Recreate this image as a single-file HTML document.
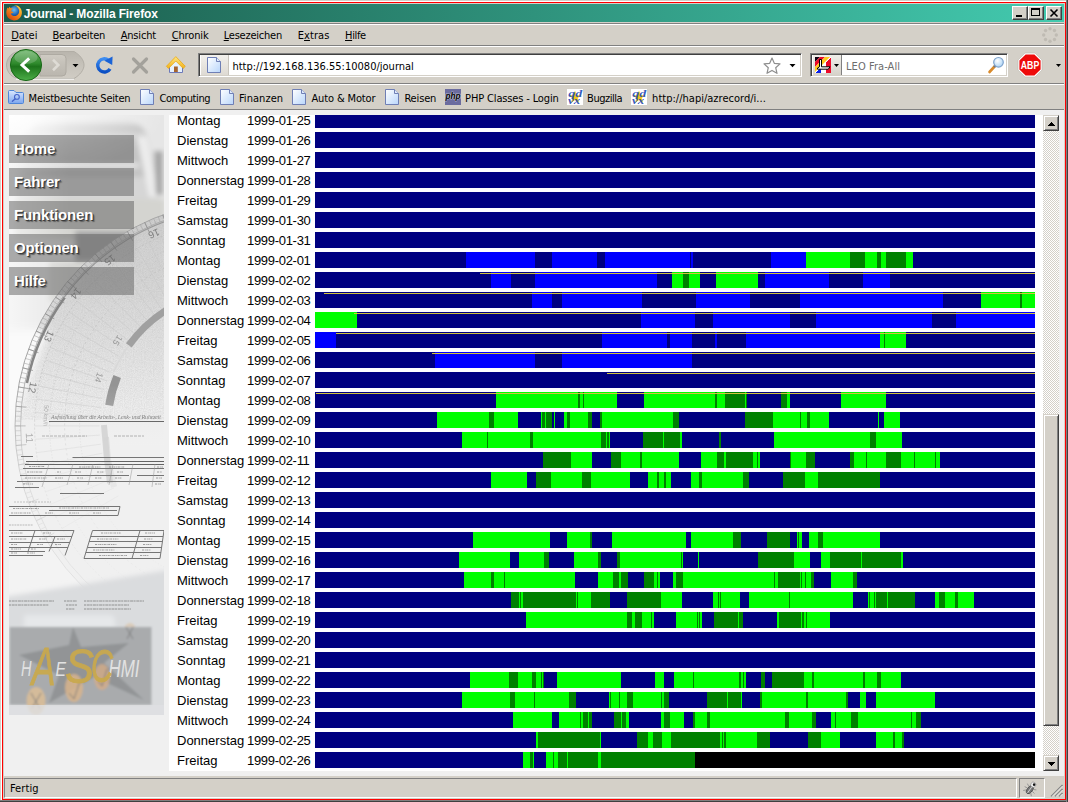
<!DOCTYPE html>
<html lang="de">
<head>
<meta charset="utf-8">
<title>Journal - Mozilla Firefox</title>
<style>
html,body{margin:0;padding:0;}
body{width:1068px;height:802px;overflow:hidden;position:relative;background:#d4d0c8;font-family:"DejaVu Sans Condensed","DejaVu Sans","Liberation Sans",sans-serif;font-size:11px;color:#000;}
.abs{position:absolute;}
.tx{position:absolute;white-space:nowrap;line-height:14px;}
#t-title{left:19.7px;letter-spacing:-0.132px}
#t-m1{left:7.2px;letter-spacing:-0.055px}
#t-m2{left:48.4px;letter-spacing:-0.160px}
#t-m3{left:116.7px;letter-spacing:-0.185px}
#t-m4{left:167.7px;letter-spacing:-0.146px}
#t-m5{left:219.7px;letter-spacing:-0.228px}
#t-m6{left:293.7px;letter-spacing:0.081px}
#t-m7{left:341.0px;letter-spacing:-0.333px}
#t-url{left:228.4px;letter-spacing:0.009px}
#t-search{left:842.0px;letter-spacing:0.067px}
#t-b1{left:24.6px;letter-spacing:-0.235px}
#t-b2{left:155.4px;letter-spacing:-0.395px}
#t-b3{left:234.9px;letter-spacing:0.055px}
#t-b4{left:307.4px;letter-spacing:-0.125px}
#t-b5{left:400.4px;letter-spacing:-0.160px}
#t-b6{left:461.1px;letter-spacing:-0.147px}
#t-b7{left:583.1px;letter-spacing:-0.487px}
#t-b8{left:648.1px;letter-spacing:0.014px}
#t-status{left:5.9px;letter-spacing:0.106px}
/* outer frame */
#f-white{left:1px;top:1px;width:1065px;height:799px;border-left:1px solid #fff;border-top:1px solid #fff;box-sizing:border-box;}
#f-red{left:2px;top:2px;width:1064px;height:798px;border:1px solid #ff0000;box-sizing:border-box;}
#f-dk1{left:0;top:800px;width:1068px;height:1px;background:#808080;}
#f-dk2{left:0;top:801px;width:1068px;height:1px;background:#404040;}
#f-dk3{left:1066px;top:0;width:1px;height:802px;background:#808080;}
#f-dk4{left:1067px;top:0;width:1px;height:802px;background:#404040;}
/* title bar */
#title{left:4px;top:4px;width:1060px;height:18px;background:linear-gradient(to right,#1b5b4b 0%,#2f927c 50%,#43caaf 100%);}
#title .t{top:2px;color:#fff;font-family:"Liberation Sans",sans-serif;font-weight:bold;font-size:12px;line-height:16px;}
.wbtn{position:absolute;top:2px;width:16px;height:14px;background:#d4d0c8;box-sizing:border-box;border:1px solid;border-color:#fff #404040 #404040 #fff;box-shadow:inset -1px -1px 0 #808080;}
/* separators */
.sep{left:4px;width:1060px;height:2px;border-top:1px solid #808080;border-bottom:1px solid #fff;box-sizing:border-box;}
/* menu */
#menu{left:4px;top:25px;width:1060px;height:20px;}
#menu span{position:absolute;top:4px;line-height:14px;white-space:nowrap;}
#menu u{text-decoration:underline;text-underline-offset:1px;}
/* nav bar */
#nav{left:4px;top:47px;width:1060px;height:36px;}
.field{position:absolute;background:#fff;box-sizing:border-box;border:1px solid;border-color:#808080 #fff #fff #808080;box-shadow:inset 1px 1px 0 #404040, inset -1px -1px 0 #d4d0c8;}
/* bookmarks */
#bm{left:4px;top:85px;width:1060px;height:24px;}
#bm .b{position:absolute;top:7px;line-height:14px;white-space:nowrap;}
#bm svg{position:absolute;}
/* content */
#page{left:4px;top:110px;width:1060px;height:666px;background:#f0f0f0;overflow:hidden;}
#side{left:9px;top:115px;width:155px;height:600px;overflow:hidden;background:#e9e9e9;}
#frame{left:169px;top:115px;width:874px;height:656px;background:#fff;overflow:hidden;}
#frame .bars{position:absolute;left:0;top:0;}
.row{position:absolute;left:0;height:16px;line-height:16px;font-family:"Liberation Sans",sans-serif;font-size:13px;white-space:nowrap;color:#000;}
.row .dn{position:absolute;left:8px;top:1px;}
.row .dt{position:absolute;left:78px;top:1px;letter-spacing:-0.3px;}
/* scrollbar */
#sb{left:1043px;top:115px;width:16px;height:656px;background:#eae8e3;background-image:conic-gradient(#fff 25%,#d4d0c8 0 50%,#fff 0 75%,#d4d0c8 0);background-size:2px 2px;}
.sbtn{position:absolute;left:0;width:16px;background:#d4d0c8;box-sizing:border-box;border:1px solid;border-color:#d4d0c8 #404040 #404040 #d4d0c8;box-shadow:inset 1px 1px 0 #fff, inset -1px -1px 0 #808080;}
/* status */
#status{left:4px;top:776px;width:1060px;height:22px;}
.panel{position:absolute;box-sizing:border-box;border:1px solid;border-color:#808080 #fff #fff #808080;}
/* side menu */
.mi{position:absolute;left:0;width:125px;height:28px;background:rgba(100,100,100,0.52);color:#fff;font-family:"Liberation Sans",sans-serif;font-weight:bold;font-size:15px;line-height:28px;letter-spacing:-0.15px;text-shadow:1px 1px 0 #3a3a3a,2px 2px 1px rgba(70,70,70,.7);}
.mi span{position:absolute;left:5px;top:0;}
</style>
</head>
<body>
<div class="abs" id="f-white"></div>
<div class="abs" id="f-red"></div>
<div class="abs" id="f-dk1"></div><div class="abs" id="f-dk2"></div><div class="abs" id="f-dk3"></div><div class="abs" id="f-dk4"></div>

<!-- TITLE BAR -->
<div class="abs" id="title">
<svg class="abs" width="18" height="18" viewBox="0 0 18 18" style="left:1px;top:0px"><defs>
<radialGradient id="gl" cx="0.45" cy="0.35" r="0.7"><stop offset="0" stop-color="#6cc0f0"/><stop offset="0.6" stop-color="#1f64b4"/><stop offset="1" stop-color="#10306c"/></radialGradient>
<linearGradient id="fx" x1="1" y1="0" x2="0.2" y2="1"><stop offset="0" stop-color="#ffe14a"/><stop offset="0.45" stop-color="#f7941d"/><stop offset="1" stop-color="#d2420d"/></linearGradient></defs>
<circle cx="9.6" cy="7.6" r="5.6" fill="url(#gl)"/>
<path d="M9 1.2 C13.6 0.8 17.2 4.4 16.9 9 C16.6 13.6 13 16.6 8.8 16.4 C4.4 16.2 1.2 12.8 1.3 8.6 C1.3 6.4 1.9 4.6 2.6 3.4 L3.4 4.6 L4.6 2.8 L6 4.6 C6.6 4.2 7.4 4 8 4.2 C6.6 5.2 6.2 6.4 6.4 7.4 L8.6 8 C8 9 6.8 9.6 5.8 9.4 C6.6 11.4 8.6 12.4 10.6 12 C13 11.4 14.4 9.2 14.2 6.8 C14 4.2 12 2 9 1.2 Z" fill="url(#fx)"/>
</svg>
<div class="t tx" id="t-title">Journal - Mozilla Firefox</div>
<div class="wbtn" style="left:1008px"><svg width="14" height="12" style="position:absolute;left:0;top:0"><rect x="3" y="8" width="6" height="2" fill="#000"/></svg></div>
<div class="wbtn" style="left:1024px"><svg width="14" height="12" style="position:absolute;left:0;top:0"><rect x="2.5" y="1.5" width="8" height="7" fill="none" stroke="#000"/><rect x="2" y="1" width="9" height="2" fill="#000"/></svg></div>
<div class="wbtn" style="left:1042px"><svg width="14" height="12" style="position:absolute;left:0;top:0"><path d="M3.5 2.5 L10.5 9.5 M10.5 2.5 L3.5 9.5" stroke="#000" stroke-width="1.6" fill="none"/></svg></div>
</div>
<div class="abs sep" style="top:23px"></div>

<!-- MENU -->
<div class="abs" id="menu">
<span class="tx" id="t-m1"><u>D</u>atei</span>
<span class="tx" id="t-m2"><u>B</u>earbeiten</span>
<span class="tx" id="t-m3"><u>A</u>nsicht</span>
<span class="tx" id="t-m4"><u>C</u>hronik</span>
<span class="tx" id="t-m5"><u>L</u>esezeichen</span>
<span class="tx" id="t-m6">E<u>x</u>tras</span>
<span class="tx" id="t-m7"><u>H</u>ilfe</span>
<svg class="abs" width="18" height="18" viewBox="-9 -9 18 18" style="left:1037px;top:1px"><circle cx="6.30" cy="0.00" r="1.700" fill="#bfbbb3"/><circle cx="4.45" cy="4.45" r="1.700" fill="#bfbbb3"/><circle cx="0.00" cy="6.30" r="1.700" fill="#bfbbb3"/><circle cx="-4.45" cy="4.45" r="1.700" fill="#bfbbb3"/><circle cx="-6.30" cy="0.00" r="1.700" fill="#bfbbb3"/><circle cx="-4.45" cy="-4.45" r="1.700" fill="#bfbbb3"/><circle cx="-0.00" cy="-6.30" r="1.700" fill="#bfbbb3"/><circle cx="4.45" cy="-4.45" r="1.700" fill="#bfbbb3"/></svg>
</div>
<div class="abs sep" style="top:45px"></div>

<!-- NAV -->
<div class="abs" id="nav">
<div class="field" style="left:194px;top:6px;width:604px;height:24px"></div>
<div class="field" style="left:806px;top:6px;width:198px;height:24px"></div>

<svg class="abs" width="200" height="37" viewBox="0 0 200 37" style="left:0;top:0"><defs>
<linearGradient id="pill" x1="0" y1="0" x2="0" y2="1"><stop offset="0" stop-color="#b9b5ad"/><stop offset="0.5" stop-color="#c6c2ba"/><stop offset="1" stop-color="#d0ccc4"/></linearGradient>
<linearGradient id="fwd" x1="0" y1="0" x2="0" y2="1"><stop offset="0" stop-color="#cfcbc3"/><stop offset="0.5" stop-color="#c3bfb7"/><stop offset="1" stop-color="#bab6ae"/></linearGradient>
<linearGradient id="bk" x1="0" y1="0" x2="0" y2="1"><stop offset="0" stop-color="#6fb56c"/><stop offset="0.45" stop-color="#2f8a2c"/><stop offset="0.55" stop-color="#1d731b"/><stop offset="1" stop-color="#4cae48"/></linearGradient>
<linearGradient id="rl" x1="0" y1="0" x2="0" y2="1"><stop offset="0" stop-color="#3d8cf0"/><stop offset="1" stop-color="#0b4fc4"/></linearGradient>
<linearGradient id="roof" x1="0" y1="0" x2="0" y2="1"><stop offset="0" stop-color="#ffe680"/><stop offset="1" stop-color="#f2b21a"/></linearGradient>
</defs>
<!-- pill -->
<path d="M16 4.5 H70 C76 8 80 13 80 18 C80 23 76 28 70 31.5 H16 C8 31.5 2.5 25 2.5 18 C2.5 11 8 4.5 16 4.5 Z" fill="url(#pill)" stroke="#b2aea6" stroke-width="1"/>
<path d="M12 32.2 H70" stroke="#fff" stroke-width="1" opacity="0.9"/>
<!-- forward -->
<path d="M36 7.5 H58 Q62 7.500 62 11.500 V25 Q62 29 58 29 H36 Z" fill="url(#fwd)" stroke="#aeaaa2" stroke-width="1"/>
<path d="M49 12.800 L54.300 18 L49 23.200" fill="none" stroke="#dedbd5" stroke-width="2.600"/>
<!-- dropdown -->
<path d="M68.500 17 H74.500 L71.500 20.200 Z" fill="#000"/>
<!-- back -->
<circle cx="22" cy="18" r="15.600" fill="url(#bk)" stroke="#1c6a1a" stroke-width="1"/>
<ellipse cx="22" cy="10.500" rx="11.500" ry="6.500" fill="#fff" opacity="0.180"/>
<path d="M25.200 11.300 L18 18 L25.200 24.700" fill="none" stroke="#fff" stroke-width="3" stroke-linejoin="miter"/>
<!-- reload -->
<path d="M104.500 13.300 A6.600 6.600 0 1 0 106 21.800" fill="none" stroke="url(#rl)" stroke-width="3.400"/>
<path d="M100.500 13.800 L108.600 9.400 L108.200 18 Z" fill="#1a63d6"/>
<!-- stop -->
<path d="M129.500 12 L142.500 25 M142.500 12 L129.500 25" stroke="#a3a19b" stroke-width="3.200" stroke-linecap="round"/>
<!-- home -->
<path d="M165.500 17.500 L171.800 12 L178.500 17.500 V25.500 H165.500 Z" fill="#e6f1fc" stroke="#6c79b8" stroke-width="1"/>
<path d="M170 19.500 H173.800 V25 H170 Z" fill="#a8642c"/>
<path d="M162.400 19.300 L171.800 9.600 L181.300 19.300 L179.200 21.400 L171.800 14 L164.500 21.400 Z" fill="url(#roof)" stroke="#e8a818" stroke-width="0.800"/>
</svg>
<!-- url bar inner: identity box + page icon -->
<div class="abs" style="left:197px;top:8px;width:27px;height:20px;background:linear-gradient(to bottom,#f2f0ec,#dedad3);border-right:1px solid #c8c4bc"></div>
<svg class="abs" width="14" height="16" viewBox="0 0 14 16" style="left:203px;top:10px"><defs><linearGradient id="pgu" x1="0" y1="0" x2="1" y2="1"><stop offset="0" stop-color="#ffffff"/><stop offset="1" stop-color="#b9d6fb"/></linearGradient></defs><path d="M0.5 0.5 H9.5 L13.5 4.5 V15.5 H0.5 Z" fill="url(#pgu)" stroke="#6f7fb5" stroke-width="1"/><path d="M9.5 0.5 V4.5 H13.5" fill="#dfeafc" stroke="#6f7fb5" stroke-width="1"/></svg>
<!-- star -->
<svg class="abs" width="18" height="18" viewBox="0 0 18 18" style="left:759px;top:10px"><path d="M9 1 L11.300 6.300 L17 6.900 L12.700 10.700 L14 16.300 L9 13.400 L4 16.300 L5.300 10.700 L1 6.900 L6.700 6.300 Z" fill="#fff" stroke="#8e8e8e" stroke-width="1.200" stroke-linejoin="round"/></svg>
<svg class="abs" width="8" height="5" style="left:785px;top:17px"><path d="M0.500 0 H6.500 L3.500 3.200 Z" fill="#000"/></svg>
<!-- search engine -->
<div class="abs" style="left:809px;top:8px;width:28px;height:20px;background:linear-gradient(to bottom,#f0eee9,#d6d2ca);border-right:1px solid #808080"></div>
<svg class="abs" width="16" height="16" viewBox="0 0 16 16" style="left:811px;top:10px">
<rect width="16" height="16" fill="#fff"/>
<path d="M0 16 L6 10 V16 Z" fill="#0a20e8"/><path d="M11 5 L16 0 V16 H11 Z" fill="#ec0a2a"/>
<path d="M0 0 H5 L0 5 Z" fill="#100010"/><path d="M5 0 H10 L0 10 V5 Z" fill="#ec0a2a"/><path d="M10 0 H15 L0 15 V10 Z" fill="#ffc81c"/>
<path d="M0 16 L16 0" stroke="#fff" stroke-width="1"/>
<path d="M4.500 2.500 H6.500 V9.800 H15 L13.300 12.200 H2.500 V11 L4.500 9.800 Z" fill="#fff" stroke="#000" stroke-width="1"/>
</svg>
<svg class="abs" width="6" height="4" style="left:830px;top:17px"><path d="M0 0 H5 L2.500 3 Z" fill="#000"/></svg>
<!-- magnifier -->
<svg class="abs" width="18" height="18" viewBox="0 0 18 18" style="left:983px;top:9px"><defs><radialGradient id="lens" cx="0.4" cy="0.35" r="0.7"><stop offset="0" stop-color="#ffffff"/><stop offset="1" stop-color="#a9d2f5"/></radialGradient></defs>
<path d="M2.500 16 L8 10" stroke="#d98a2b" stroke-width="2.600" stroke-linecap="round"/><path d="M7 11 L8.500 9.500" stroke="#6d7b8c" stroke-width="2.400"/>
<circle cx="11.500" cy="6.300" r="4.800" fill="url(#lens)" stroke="#7fa3cc" stroke-width="1.200"/></svg>
<!-- ABP -->
<svg class="abs" width="26" height="26" viewBox="-13 -13 26 26" style="left:1013px;top:5px">
<path d="M-5 -12 H5 L12 -5 V5 L5 12 H-5 L-12 5 V-5 Z" fill="#fff" stroke="#b9b5ad" stroke-width="0.600"/>
<path d="M-4.400 -10.600 H4.400 L10.600 -4.400 V4.400 L4.400 10.600 H-4.400 L-10.600 4.400 V-4.400 Z" fill="#ee0a0a"/>
<text x="0" y="3.600" text-anchor="middle" font-family="Liberation Sans, sans-serif" font-weight="bold" font-size="10" fill="#fff" textLength="18.500" lengthAdjust="spacingAndGlyphs">ABP</text></svg>
<svg class="abs" width="6" height="4" style="left:1052px;top:17px"><path d="M0 0 H5 L2.500 3 Z" fill="#000"/></svg>

<div class="abs tx" id="t-url" style="top:13px">http://192.168.136.55:10080/journal</div>
<div class="abs tx" id="t-search" style="top:13px;color:#6d6d6d">LEO Fra-All</div>
</div>
<div class="abs sep" style="top:83px"></div>

<!-- BOOKMARKS -->
<div class="abs" id="bm">
<svg width="16" height="14" viewBox="0 0 16 14" style="left:4px;top:5px"><defs><linearGradient id="fo" x1="0" y1="0" x2="0" y2="1"><stop offset="0" stop-color="#dbe8ff"/><stop offset="1" stop-color="#7ca6ee"/></linearGradient></defs>
<path d="M0.500 1.500 Q0.500 0.500 1.500 0.500 H6 L8 2.500 H14.500 Q15.500 2.500 15.500 3.500 V12.500 Q15.500 13.500 14.500 13.500 H1.500 Q0.500 13.500 0.500 12.500 Z" fill="url(#fo)" stroke="#4f86d8" stroke-width="1"/>
<circle cx="8.900" cy="6.900" r="2.400" fill="none" stroke="#4363c9" stroke-width="1.100"/><path d="M7 9 L4.400 11.300" stroke="#4363c9" stroke-width="1.400" stroke-linecap="round"/></svg>
<svg width="14" height="16" viewBox="0 0 14 16" style="left:136px;top:4px"><defs><linearGradient id="pgb0" x1="0" y1="0" x2="1" y2="1"><stop offset="0" stop-color="#ffffff"/><stop offset="1" stop-color="#b9d6fb"/></linearGradient></defs><path d="M0.5 0.5 H9.5 L13.5 4.5 V15.5 H0.5 Z" fill="url(#pgb0)" stroke="#6f7fb5" stroke-width="1"/><path d="M9.5 0.5 V4.5 H13.5" fill="#dfeafc" stroke="#6f7fb5" stroke-width="1"/></svg>
<svg width="14" height="16" viewBox="0 0 14 16" style="left:216px;top:4px"><defs><linearGradient id="pgb1" x1="0" y1="0" x2="1" y2="1"><stop offset="0" stop-color="#ffffff"/><stop offset="1" stop-color="#b9d6fb"/></linearGradient></defs><path d="M0.5 0.5 H9.5 L13.5 4.5 V15.5 H0.5 Z" fill="url(#pgb1)" stroke="#6f7fb5" stroke-width="1"/><path d="M9.5 0.5 V4.5 H13.5" fill="#dfeafc" stroke="#6f7fb5" stroke-width="1"/></svg>
<svg width="14" height="16" viewBox="0 0 14 16" style="left:288px;top:4px"><defs><linearGradient id="pgb2" x1="0" y1="0" x2="1" y2="1"><stop offset="0" stop-color="#ffffff"/><stop offset="1" stop-color="#b9d6fb"/></linearGradient></defs><path d="M0.5 0.5 H9.5 L13.5 4.5 V15.5 H0.5 Z" fill="url(#pgb2)" stroke="#6f7fb5" stroke-width="1"/><path d="M9.5 0.5 V4.5 H13.5" fill="#dfeafc" stroke="#6f7fb5" stroke-width="1"/></svg>
<svg width="14" height="16" viewBox="0 0 14 16" style="left:381px;top:4px"><defs><linearGradient id="pgb3" x1="0" y1="0" x2="1" y2="1"><stop offset="0" stop-color="#ffffff"/><stop offset="1" stop-color="#b9d6fb"/></linearGradient></defs><path d="M0.5 0.5 H9.5 L13.5 4.5 V15.5 H0.5 Z" fill="url(#pgb3)" stroke="#6f7fb5" stroke-width="1"/><path d="M9.5 0.5 V4.5 H13.5" fill="#dfeafc" stroke="#6f7fb5" stroke-width="1"/></svg>
<svg width="16" height="16" viewBox="0 0 16 16" style="left:441px;top:4px"><rect width="16" height="16" fill="#6b6c9f"/><rect y="4.500" width="16" height="5.500" fill="#9c9dc0" opacity="0.550"/>
<text x="8" y="10" text-anchor="middle" font-family="Liberation Sans, sans-serif" font-style="italic" font-weight="bold" font-size="9" fill="#000" stroke="#e8e8f0" stroke-width="0.600" paint-order="stroke" textLength="15" lengthAdjust="spacingAndGlyphs">php</text></svg>
<svg width="16" height="16" viewBox="0 0 16 16" style="left:563px;top:4px"><rect width="16" height="16" fill="#ffffff"/>
<path d="M8 1.500 L9.600 6.200 L14.500 6.200 L10.600 9.100 L12 13.800 L8 11 L4 13.800 L5.400 9.100 L1.500 6.200 L6.400 6.200 Z" fill="#f5c518"/>
<text x="8.300" y="8" text-anchor="middle" font-family="Liberation Serif, serif" font-style="italic" font-weight="bold" font-size="11" fill="#1846b8" fill-opacity="0.880" textLength="14" lengthAdjust="spacingAndGlyphs">qd</text>
<text x="7" y="15" text-anchor="middle" font-family="Liberation Serif, serif" font-style="italic" font-weight="bold" font-size="10" fill="#1846b8" fill-opacity="0.900" textLength="12" lengthAdjust="spacingAndGlyphs">vx</text></svg>
<svg width="16" height="16" viewBox="0 0 16 16" style="left:627px;top:4px"><rect width="16" height="16" fill="#ffffff"/>
<path d="M8 1.500 L9.600 6.200 L14.500 6.200 L10.600 9.100 L12 13.800 L8 11 L4 13.800 L5.400 9.100 L1.500 6.200 L6.400 6.200 Z" fill="#f5c518"/>
<text x="8.300" y="8" text-anchor="middle" font-family="Liberation Serif, serif" font-style="italic" font-weight="bold" font-size="11" fill="#1846b8" fill-opacity="0.880" textLength="14" lengthAdjust="spacingAndGlyphs">qd</text>
<text x="7" y="15" text-anchor="middle" font-family="Liberation Serif, serif" font-style="italic" font-weight="bold" font-size="10" fill="#1846b8" fill-opacity="0.900" textLength="12" lengthAdjust="spacingAndGlyphs">vx</text></svg>
<span class="b tx" id="t-b1">Meistbesuchte Seiten</span>
<span class="b tx" id="t-b2">Computing</span>
<span class="b tx" id="t-b3">Finanzen</span>
<span class="b tx" id="t-b4">Auto &amp; Motor</span>
<span class="b tx" id="t-b5">Reisen</span>
<span class="b tx" id="t-b6">PHP Classes - Login</span>
<span class="b tx" id="t-b7">Bugzilla</span>
<span class="b tx" id="t-b8">http://hapi/azrecord/i...</span>
</div>
<div class="abs" style="left:4px;top:109px;width:1060px;height:1px;background:#808080"></div>

<!-- PAGE -->
<div class="abs" id="page"></div>
<div class="abs" id="side">
<svg class="abs" width="155" height="600" viewBox="0 0 155 600" style="left:0;top:0"><defs>
<filter id="b6" x="-20%" y="-20%" width="140%" height="140%"><feGaussianBlur stdDeviation="5"/></filter>
<filter id="b3" x="-20%" y="-20%" width="140%" height="140%"><feGaussianBlur stdDeviation="2.500"/></filter>
<filter id="b1" x="-20%" y="-20%" width="140%" height="140%"><feGaussianBlur stdDeviation="0.800"/></filter>
<radialGradient id="wf" cx="0" cy="0" r="1"><stop offset="0" stop-color="#fff" stop-opacity="1"/><stop offset="1" stop-color="#fff" stop-opacity="0"/></radialGradient>
<linearGradient id="lf" x1="0" y1="0" x2="1" y2="0"><stop offset="0" stop-color="#fff" stop-opacity="0.900"/><stop offset="1" stop-color="#fff" stop-opacity="0"/></linearGradient>
<clipPath id="disc"><circle cx="230.600" cy="310.900" r="224.600"/></clipPath>
<linearGradient id="dg" x1="0" y1="100" x2="0" y2="330" gradientUnits="userSpaceOnUse"><stop offset="0" stop-color="#cdcdcd"/><stop offset="0.550" stop-color="#dedede"/><stop offset="0.850" stop-color="#ededed"/><stop offset="1" stop-color="#f0f0f0"/></linearGradient>
<filter id="nz" x="0" y="0" width="100%" height="100%"><feTurbulence type="fractalNoise" baseFrequency="0.900" numOctaves="2" seed="3"/><feColorMatrix type="matrix" values="0 0 0 0 0.350  0 0 0 0 0.350  0 0 0 0 0.350  0.600 0.600 0 0 -0.450"/></filter>
<linearGradient id="rmg" x1="0" y1="0" x2="0" y2="600" gradientUnits="userSpaceOnUse"><stop offset="0" stop-color="#fff"/><stop offset="0.450" stop-color="#fff"/><stop offset="0.600" stop-color="#555"/><stop offset="0.750" stop-color="#333"/><stop offset="1" stop-color="#222"/></linearGradient><mask id="rm" maskUnits="userSpaceOnUse" x="0" y="0" width="155" height="600"><rect width="155" height="600" fill="url(#rmg)"/></mask>
<clipPath id="sc"><rect width="155" height="600"/></clipPath>
</defs><g clip-path="url(#sc)"><rect width="155" height="600" fill="#f1f1f1"/><g filter="url(#b3)"><rect x="-10" y="-10" width="180" height="250" fill="#e6e6e6"/><path d="M22 12 Q26 6 40 6 H118 Q132 7 138 18 L150 70 V110 H8 V40 Q10 20 22 12 Z" fill="#d6d6d6"/><path d="M26 10 H128 Q134 12 136 18 H22 Q22 13 26 10 Z" fill="#c2c2c2"/><path d="M20 22 H136 L144 62 H14 Z" fill="#c4c4c4"/><path d="M128 22 L138 22 L150 82 L140 82 Z" fill="#ececec"/><path d="M145 36 H154 V80 H147 Z" fill="#a6a6a6"/><rect x="6" y="84" width="150" height="40" fill="#d4d4d0"/><rect x="66" y="116" width="62" height="30" fill="#a4a4a4"/><rect x="40" y="146" width="120" height="40" fill="#d6d6d3"/><path d="M0 48 H130 V53 H0 Z" fill="#e4e4e4"/></g><rect x="0" y="0" width="60" height="240" fill="url(#lf)" opacity="0.700"/><rect x="0" y="0" width="155" height="60" fill="url(#wf)"/><path d="M0 215 L0 600 L155 600 L155 215 Z" fill="#f3f3f3"/><g clip-path="url(#disc)"><rect x="0" y="90" width="155" height="340" fill="url(#dg)" opacity="0.900"/><rect x="0" y="330" width="155" height="150" fill="#f0f0f0"/><rect x="0" y="90" width="155" height="215" filter="url(#nz)" opacity="0.450"/></g><g filter="url(#b6)"><path d="M-20 215 L40 215 L-5 330 L-20 330 Z" fill="#fafafa"/></g><g mask="url(#rm)"><circle cx="230.6" cy="310.9" r="224.600" fill="none" stroke="#a6a6a6" stroke-width="1"/><circle cx="230.6" cy="310.9" r="219" fill="none" stroke="#a4a4a4" stroke-width="0.800"/><circle cx="230.6" cy="310.9" r="205" fill="none" stroke="#b8b8b8" stroke-width="0.600" stroke-dasharray="2 2"/><circle cx="230.6" cy="310.9" r="190" fill="none" stroke="#c0c0c0" stroke-width="0.600" stroke-dasharray="1 2"/><circle cx="230.6" cy="310.9" r="175" fill="none" stroke="#bcbcbc" stroke-width="0.600" stroke-dasharray="2 3"/><circle cx="230.6" cy="310.9" r="160" fill="none" stroke="#c4c4c4" stroke-width="0.600" stroke-dasharray="1 2"/><path d="M40.9 420.4L36.1 423.2M38.6 416.2L33.7 418.9M36.3 412.0L31.4 414.6M34.2 407.8L29.2 410.2M32.1 403.5L27.0 405.8M30.1 399.1L25.0 401.4M28.3 394.7L23.1 396.9M26.5 390.3L21.3 392.3M24.8 385.8L19.5 387.7M23.2 381.3L17.9 383.1M21.7 376.8L16.4 378.4M20.3 372.2L15.0 373.7M19.1 367.6L13.7 369.0M17.9 363.0L12.4 364.3M16.8 358.3L11.3 359.5M15.8 353.6L10.3 354.7M14.9 348.9L9.4 349.9M14.1 344.2L8.6 345.1M13.5 339.5L7.9 340.2M12.9 334.7L7.3 335.4M12.4 330.0L6.9 330.5M12.1 325.2L6.5 325.6M11.8 320.5L6.2 320.7M11.7 315.7L6.1 315.8M11.6 310.9L6.0 310.9M11.7 306.1L6.1 306.0M11.8 301.3L6.2 301.1M12.1 296.6L6.5 296.2M12.4 291.8L6.9 291.3M12.9 287.1L7.3 286.4M13.5 282.3L7.9 281.6M14.1 277.6L8.6 276.7M14.9 272.9L9.4 271.9M15.8 268.2L10.3 267.1M16.8 263.5L11.3 262.3M17.9 258.8L12.4 257.5M19.1 254.2L13.7 252.8M20.3 249.6L15.0 248.1M21.7 245.0L16.4 243.4M23.2 240.5L17.9 238.7M24.8 236.0L19.5 234.1M26.5 231.5L21.3 229.5M28.3 227.1L23.1 224.9M30.1 222.7L25.0 220.4M32.1 218.3L27.0 216.0M34.2 214.0L29.2 211.6M36.3 209.8L31.4 207.2M38.6 205.6L33.7 202.9M40.9 201.4L36.1 198.6M43.4 197.3L38.6 194.4M45.9 193.2L41.2 190.2M48.5 189.2L43.9 186.1M51.2 185.3L46.6 182.1M54.0 181.4L49.5 178.1M56.9 177.6L52.4 174.2M59.8 173.8L55.4 170.3M62.8 170.1L58.5 166.5M65.9 166.5L61.7 162.8M69.1 162.9L65.0 159.2M72.4 159.5L68.4 155.6M75.7 156.0L71.8 152.1M79.2 152.7L75.3 148.7M82.6 149.4L78.9 145.3M86.2 146.2L82.5 142.0M89.8 143.1L86.2 138.8M93.5 140.1L90.0 135.7M97.3 137.2L93.9 132.7M101.1 134.3L97.8 129.8M105.0 131.5L101.8 126.9M108.9 128.8L105.8 124.2M112.9 126.2L109.9 121.5M117.0 123.7L114.1 118.9M121.1 121.2L118.3 116.4M125.3 118.9L122.6 114.0M129.5 116.6L126.9 111.7M133.7 114.5L131.3 109.5M138.0 112.4L135.7 107.3M142.4 110.4L140.1 105.3M146.8 108.6L144.6 103.4M151.2 106.8L149.2 101.6M155.7 105.1L153.8 99.8M160.2 103.5L158.4 98.2M164.7 102.0L163.1 96.7M169.3 100.6L167.8 95.3M173.9 99.4L172.5 94.0M178.5 98.2L177.2 92.7M183.2 97.1L182.0 91.6M187.9 96.1L186.8 90.6M192.6 95.2L191.6 89.7" stroke="#9a9a9a" stroke-width="0.5" fill="none"/><path d="M45.3 417.9L36.1 423.2M36.7 401.3L27.0 405.8M29.5 384.1L19.5 387.7M23.9 366.3L13.7 369.0M19.9 348.1L9.4 349.9M17.4 329.6L6.9 330.5M16.6 310.9L6.0 310.9M17.4 292.2L6.9 291.3M19.9 273.7L9.4 271.9M23.9 255.5L13.7 252.8M29.5 237.7L19.5 234.1M36.7 220.5L27.0 216.0M45.3 203.9L36.1 198.6M55.3 188.2L46.6 182.1M66.7 173.3L58.5 166.5M79.3 159.6L71.8 152.1M93.0 147.0L86.2 138.8M107.9 135.6L101.8 126.9M123.6 125.6L118.3 116.4M140.2 117.0L135.7 107.3M157.4 109.8L153.8 99.8M175.2 104.2L172.5 94.0M193.4 100.2L191.6 89.7" stroke="#8a8a8a" stroke-width="0.7" fill="none"/><path d="M109.4 380.9L53.1 413.4M105.0 372.8L46.7 401.6M101.3 364.5L41.2 389.4M98.0 355.9L36.5 376.8M95.4 347.1L32.6 364.0M93.3 338.2L29.5 350.9M91.8 329.2L27.4 337.7M90.9 320.1L26.0 324.3M90.6 310.9L25.6 310.9M90.9 301.7L26.0 297.5M91.8 292.6L27.4 284.1M93.3 283.6L29.5 270.9M95.4 274.7L32.6 257.8M98.0 265.9L36.5 245.0M101.3 257.3L41.2 232.4M105.0 249.0L46.7 220.2M109.4 240.9L53.1 208.4M114.2 233.1L60.1 197.0M119.5 225.7L68.0 186.1M125.3 218.6L76.5 175.7M131.6 211.9L85.6 165.9M138.3 205.6L95.4 156.8M145.4 199.8L105.8 148.3M152.8 194.5L116.7 140.4M160.6 189.7L128.1 133.4M168.7 185.3L139.9 127.0M177.0 181.6L152.1 121.5M185.6 178.3L164.7 116.8M194.4 175.7L177.5 112.9M203.3 173.6L190.6 109.8" stroke="#c6c6c6" stroke-width="0.5" fill="none"/><path d="M17.9 268.0 A217 217 0 0 1 55.7 182.4" stroke="#858585" stroke-width="2.600" fill="none"/><path d="M55.3 182.1 A217.5 217.5 0 0 1 200.3 95.5" stroke="#9a9a9a" stroke-width="1.200" fill="none"/><path d="M158.0 194.7 A137 137 0 0 0 119.8 230.4" stroke="#a0a0a0" stroke-width="7" fill="none"/><path d="M108.2 261.5 A132 132 0 0 0 100.2 290.3" stroke="#949494" stroke-width="8" fill="none"/><path d="M97 322 L99 345 L105 372" stroke="#d2d2d2" stroke-width="6" fill="none"/><path d="M119.8 230.4 A137 137 0 0 0 104.5 257.4" stroke="#d8d8d8" stroke-width="1.500" fill="none"/><text x="143.6" y="115.4" font-family="Liberation Sans, sans-serif" font-size="10" fill="#7e7e7e" text-anchor="middle" transform="rotate(156 143.6 115.4)">16</text><text x="98.8" y="142.3" font-family="Liberation Sans, sans-serif" font-size="10" fill="#7e7e7e" text-anchor="middle" transform="rotate(142 98.8 142.3)">15</text><text x="64.3" y="176.2" font-family="Liberation Sans, sans-serif" font-size="10" fill="#7e7e7e" text-anchor="middle" transform="rotate(129 64.3 176.2)">14</text><text x="37.0" y="219.8" font-family="Liberation Sans, sans-serif" font-size="10" fill="#7e7e7e" text-anchor="middle" transform="rotate(115 37.0 219.8)">13</text><text x="20.2" y="271.9" font-family="Liberation Sans, sans-serif" font-size="10" fill="#7e7e7e" text-anchor="middle" transform="rotate(100 20.2 271.9)">12</text><text x="17.0" y="323.2" font-family="Liberation Sans, sans-serif" font-size="10" fill="#7e7e7e" text-anchor="middle" transform="rotate(87 17.0 323.2)">11</text><text x="106.1" y="223.7" font-family="Liberation Sans, sans-serif" font-size="9" fill="#9a9a9a" text-anchor="middle" transform="rotate(125 106.1 223.7)">15</text><text x="86.9" y="261.4" font-family="Liberation Sans, sans-serif" font-size="9" fill="#9a9a9a" text-anchor="middle" transform="rotate(109 86.9 261.4)">14</text><text x="34.9" y="300.6" font-family="Liberation Sans, sans-serif" font-size="6" fill="#999" text-anchor="middle" transform="rotate(93 34.9 300.6)">50 km/h</text></g><g opacity="0.900"><path d="M40 306.500 H155" stroke="#5a5a5a" stroke-width="1"/><text x="42" y="304" font-family="Liberation Serif, serif" font-style="italic" font-size="6" fill="#777" textLength="110">Aufstellung über die Arbeits-, Lenk- und Ruhezeit</text><path d="M33 321 H78 M105 321 H135" stroke="#999" stroke-width="0.800" stroke-dasharray="3 1"/><path d="M95 310 L98 345 L101 368" stroke="#d4d4d4" stroke-width="6" fill="none"/><path d="M63.5000 342.500 H155 M12 341.500 H24" stroke="#686868" stroke-width="1" fill="none"/><path d="M17 346.500 H155 M16 349.500 H155" stroke="#555" stroke-width="1" fill="none"/><path d="M14 353.500 H155 M11 360.500 H120 M128 360.500 H155 M8 366.500 H155 M6 372.500 H30 M51 378.500 H95" stroke="#686868" stroke-width="1" fill="none"/><path d="M40 349 L33 372 M64 349 L58 370 M84 349 L79 370 M104 349 L100 370 M124 349 L120 370 M146 349 L143 372" stroke="#8a8a8a" stroke-width="0.500"/><path d="M20 351.500 H36 M18 357 H34 M16 363 H38 M14 369 H24 M48 357 H52 M66 357 H72 M88 357 H95 M108 357 H114 M46 363 H54 M68 363 H74 M86 363 H93 M106 363 H113 M148 352 H154 M148 357 H153 M147 363 H153 M146 369 H152 M70 352 H92 M100 352 H116" stroke="#8c8c8c" stroke-width="0.900" stroke-dasharray="2 0.800 1 0.600"/><path d="M5 387 H42" stroke="#999" stroke-width="0.600" stroke-dasharray="2 1"/><path d="M0 391.500 H111 L109 400.500 H0 M40 395.500 H108" stroke="#686868" stroke-width="1" fill="none"/><path d="M4 393.500 H30 M50 393 H100 M2 398 H22 M36 398 H44 M60 398 H70 M84 398 H92" stroke="#8c8c8c" stroke-width="0.900" stroke-dasharray="2 0.800 1 0.600"/><path d="M0 410 H24" stroke="#999" stroke-width="0.700" stroke-dasharray="2 0.700"/><path d="M0 415.500 H65 L56 440.500 M0 421.500 H63 M0 427.500 H61 M0 432.500 H59 M0 436.500 H36 M0 440.500 H34 M26 415.500 L19 436.500 M46 421.500 L40 436.500" stroke="#686868" stroke-width="1" fill="none"/><path d="M2 418 H14 M34 418 H42 M2 424 H18 M30 424 H38 M48 424 H56 M2 429.500 H8 M28 429.500 H34 M46 429.500 H52 M2 434 H12 M22 434 H27 M2 438 H8 M18 438 H26" stroke="#8c8c8c" stroke-width="0.900" stroke-dasharray="2 0.800 1 0.600"/><path d="M83.5000 415.500 H155 L151 443.500 H75 Z M81.800 421.500 H154 M80.200 426.500 H153.400 M78.5000 432.500 H152.600 M76.800 437.500 H151.800 M131 415.500 L123 443.500" stroke="#686868" stroke-width="1" fill="none"/><path d="M92 418 H112 M88 424 H110 M86 429.500 H108 M84 435 H106 M90 440.500 H118 M136 418 H146 M135 424 H144 M134 429.500 H143 M133 435 H142 M131 440.500 H140" stroke="#8c8c8c" stroke-width="0.900" stroke-dasharray="2 0.800 1 0.600"/></g><g filter="url(#b3)"><path d="M-5 482 L70 470 L160 455 V610 H-5 Z" fill="#dadcde"/><path d="M15 500 H100 Q106 500 106 506 V520 H15 Z" fill="#e6e8ea"/></g><path d="M0 486 H45 M55 486 H68 M75 486 H135 M0 490 H40 M57 490 H68 M75 490 H120 M57 494 H66 M75 494 H122" stroke="#888" stroke-width="0.900" stroke-dasharray="2 0.700 3 0.500"/><g filter="url(#b1)"><ellipse cx="121" cy="518" rx="7" ry="10" fill="#dcc4a8" opacity="0.700"/><ellipse cx="135" cy="540" rx="5" ry="9" fill="#e4d4c4" opacity="0.700"/><rect x="0.500" y="512" width="142" height="78" fill="#a9abad"/><path d="M10 540 L60 530 L64 512 L72 532 L120 528 L95 548 L135 585 L85 562 L40 588 L50 560 Z" fill="#8c8e90" opacity="0.800"/><path d="M0.500 512 H142.500 V590 H0.500 Z" fill="none" stroke="#c8cacc" stroke-width="1" stroke-dasharray="1.500 1.500"/><ellipse cx="27" cy="586" rx="9.500" ry="14" fill="#d8bc98" opacity="0.900"/><ellipse cx="65" cy="573" rx="9" ry="14" fill="#d8b48c" opacity="0.850"/><ellipse cx="93" cy="562" rx="8" ry="13" fill="#d4ac88" opacity="0.800"/><path d="M22 578 L31 594 M32 578 L23 593 M60 578 L65 584 L71 566 M89 566 L93 571 L98 554 M117 512 L124 524 M124 512 L118 524" stroke="#777" stroke-width="0.900" fill="none"/></g><rect x="0" y="590" width="155" height="10" fill="#dfe0e2" opacity="0.800"/><g font-family="Liberation Sans, sans-serif" font-style="italic"><text x="12" y="561" font-size="22" fill="#e2e2e2" textLength="10.500" lengthAdjust="spacingAndGlyphs">H</text><text x="46.500" y="561" font-size="20" fill="#e2e2e2" textLength="10.500" lengthAdjust="spacingAndGlyphs">E</text><text x="99.500" y="562" font-size="23" fill="#e2e2e2" textLength="31" lengthAdjust="spacingAndGlyphs">HMI</text><g fill="#c9a94e" stroke="#c9a94e" stroke-width="0.800" opacity="0.950"><text x="22.500" y="570" font-size="54" textLength="24" lengthAdjust="spacingAndGlyphs">A</text><text x="56" y="568" font-size="49" textLength="29" lengthAdjust="spacingAndGlyphs">S</text><text x="82" y="567" font-size="47" textLength="22" lengthAdjust="spacingAndGlyphs">C</text></g></g></g></svg>
<div class="mi" style="top:20px"><span>Home</span></div>
<div class="mi" style="top:53px"><span>Fahrer</span></div>
<div class="mi" style="top:86px"><span>Funktionen</span></div>
<div class="mi" style="top:119px"><span>Optionen</span></div>
<div class="mi" style="top:152px"><span>Hilfe</span></div>
</div>
<div class="abs" id="frame">
<svg class="bars" width="874" height="656" viewBox="0 0 874 656" shape-rendering="crispEdges"><rect x="146" y="-3" width="720" height="16" fill="#000080"/><rect x="146" y="17" width="720" height="16" fill="#000080"/><rect x="146" y="37" width="720" height="16" fill="#000080"/><rect x="146" y="57" width="720" height="16" fill="#000080"/><rect x="146" y="77" width="720" height="16" fill="#000080"/><rect x="146" y="97" width="720" height="16" fill="#000080"/><rect x="146" y="117" width="720" height="16" fill="#000080"/><rect x="146" y="137" width="151" height="16" fill="#000080"/><rect x="297" y="137" width="69" height="16" fill="#0000ff"/><rect x="366" y="137" width="17" height="16" fill="#000080"/><rect x="383" y="137" width="45" height="16" fill="#0000ff"/><rect x="428" y="137" width="8" height="16" fill="#000080"/><rect x="436" y="137" width="85" height="16" fill="#0000ff"/><rect x="521" y="137" width="1" height="16" fill="#000080"/><rect x="522" y="137" width="2" height="16" fill="#0000ff"/><rect x="524" y="137" width="78" height="16" fill="#000080"/><rect x="602" y="137" width="35" height="16" fill="#0000ff"/><rect x="637" y="137" width="44" height="16" fill="#00ff00"/><rect x="681" y="137" width="15" height="16" fill="#008000"/><rect x="696" y="137" width="12" height="16" fill="#00ff00"/><rect x="708" y="137" width="4" height="16" fill="#008000"/><rect x="712" y="137" width="5" height="16" fill="#00ff00"/><rect x="717" y="137" width="20" height="16" fill="#008000"/><rect x="737" y="137" width="7" height="16" fill="#00ff00"/><rect x="744" y="137" width="122" height="16" fill="#000080"/><rect x="146" y="157" width="176" height="16" fill="#000080"/><rect x="322" y="157" width="20" height="16" fill="#0000ff"/><rect x="342" y="157" width="24" height="16" fill="#000080"/><rect x="366" y="157" width="122" height="16" fill="#0000ff"/><rect x="488" y="157" width="15" height="16" fill="#000080"/><rect x="503" y="157" width="11" height="16" fill="#00ff00"/><rect x="514" y="157" width="6" height="16" fill="#008000"/><rect x="520" y="157" width="11" height="16" fill="#00ff00"/><rect x="531" y="157" width="16" height="16" fill="#000080"/><rect x="547" y="157" width="42" height="16" fill="#00ff00"/><rect x="589" y="157" width="7" height="16" fill="#000080"/><rect x="596" y="157" width="64" height="16" fill="#0000ff"/><rect x="660" y="157" width="34" height="16" fill="#000080"/><rect x="694" y="157" width="27" height="16" fill="#0000ff"/><rect x="721" y="157" width="145" height="16" fill="#000080"/><rect x="311" y="158" width="555" height="1" fill="#d4c43c"/><rect x="146" y="177" width="217" height="16" fill="#000080"/><rect x="363" y="177" width="20" height="16" fill="#0000ff"/><rect x="383" y="177" width="10" height="16" fill="#000080"/><rect x="393" y="177" width="80" height="16" fill="#0000ff"/><rect x="473" y="177" width="54" height="16" fill="#000080"/><rect x="527" y="177" width="54" height="16" fill="#0000ff"/><rect x="581" y="177" width="50" height="16" fill="#000080"/><rect x="631" y="177" width="143" height="16" fill="#0000ff"/><rect x="774" y="177" width="38" height="16" fill="#000080"/><rect x="812" y="177" width="39" height="16" fill="#00ff00"/><rect x="851" y="177" width="2" height="16" fill="#008000"/><rect x="853" y="177" width="13" height="16" fill="#00ff00"/><rect x="155" y="178" width="711" height="1" fill="#d4c43c"/><rect x="146" y="197" width="42" height="16" fill="#00ff00"/><rect x="188" y="197" width="284" height="16" fill="#000080"/><rect x="472" y="197" width="54" height="16" fill="#0000ff"/><rect x="526" y="197" width="18" height="16" fill="#000080"/><rect x="544" y="197" width="77" height="16" fill="#0000ff"/><rect x="621" y="197" width="26" height="16" fill="#000080"/><rect x="647" y="197" width="116" height="16" fill="#0000ff"/><rect x="763" y="197" width="24" height="16" fill="#000080"/><rect x="787" y="197" width="79" height="16" fill="#0000ff"/><rect x="185" y="198" width="681" height="1" fill="#d4c43c"/><rect x="146" y="217" width="21" height="16" fill="#0000ff"/><rect x="167" y="217" width="266" height="16" fill="#000080"/><rect x="433" y="217" width="65" height="16" fill="#0000ff"/><rect x="498" y="217" width="3" height="16" fill="#000080"/><rect x="501" y="217" width="22" height="16" fill="#0000ff"/><rect x="523" y="217" width="23" height="16" fill="#000080"/><rect x="546" y="217" width="2" height="16" fill="#0000ff"/><rect x="548" y="217" width="29" height="16" fill="#000080"/><rect x="577" y="217" width="134" height="16" fill="#0000ff"/><rect x="711" y="217" width="4" height="16" fill="#00ff00"/><rect x="715" y="217" width="1" height="16" fill="#008000"/><rect x="716" y="217" width="21" height="16" fill="#00ff00"/><rect x="737" y="217" width="129" height="16" fill="#000080"/><rect x="167" y="218" width="699" height="1" fill="#d4c43c"/><rect x="146" y="237" width="120" height="16" fill="#000080"/><rect x="266" y="237" width="100" height="16" fill="#0000ff"/><rect x="366" y="237" width="27" height="16" fill="#000080"/><rect x="393" y="237" width="130" height="16" fill="#0000ff"/><rect x="523" y="237" width="343" height="16" fill="#000080"/><rect x="263" y="238" width="603" height="1" fill="#d4c43c"/><rect x="146" y="257" width="720" height="16" fill="#000080"/><rect x="438" y="258" width="428" height="1" fill="#d4c43c"/><rect x="146" y="277" width="181" height="16" fill="#000080"/><rect x="327" y="277" width="82" height="16" fill="#00ff00"/><rect x="409" y="277" width="2" height="16" fill="#008000"/><rect x="411" y="277" width="3" height="16" fill="#00ff00"/><rect x="414" y="277" width="1" height="16" fill="#008000"/><rect x="415" y="277" width="33" height="16" fill="#00ff00"/><rect x="448" y="277" width="27" height="16" fill="#000080"/><rect x="475" y="277" width="71" height="16" fill="#00ff00"/><rect x="546" y="277" width="2" height="16" fill="#008000"/><rect x="548" y="277" width="8" height="16" fill="#00ff00"/><rect x="556" y="277" width="20" height="16" fill="#008000"/><rect x="576" y="277" width="1" height="16" fill="#00ff00"/><rect x="577" y="277" width="1" height="16" fill="#008000"/><rect x="578" y="277" width="34" height="16" fill="#000080"/><rect x="612" y="277" width="6" height="16" fill="#008000"/><rect x="618" y="277" width="3" height="16" fill="#00ff00"/><rect x="621" y="277" width="51" height="16" fill="#000080"/><rect x="672" y="277" width="45" height="16" fill="#00ff00"/><rect x="717" y="277" width="149" height="16" fill="#000080"/><rect x="147" y="278" width="719" height="1" fill="#d4c43c"/><rect x="146" y="297" width="122" height="16" fill="#000080"/><rect x="268" y="297" width="52" height="16" fill="#00ff00"/><rect x="320" y="297" width="5" height="16" fill="#008000"/><rect x="325" y="297" width="24" height="16" fill="#00ff00"/><rect x="349" y="297" width="23" height="16" fill="#000080"/><rect x="372" y="297" width="1" height="16" fill="#00ff00"/><rect x="373" y="297" width="3" height="16" fill="#008000"/><rect x="376" y="297" width="1" height="16" fill="#00ff00"/><rect x="377" y="297" width="6" height="16" fill="#008000"/><rect x="383" y="297" width="2" height="16" fill="#000080"/><rect x="385" y="297" width="1" height="16" fill="#00ff00"/><rect x="386" y="297" width="9" height="16" fill="#000080"/><rect x="395" y="297" width="3" height="16" fill="#00ff00"/><rect x="398" y="297" width="3" height="16" fill="#008000"/><rect x="401" y="297" width="18" height="16" fill="#00ff00"/><rect x="419" y="297" width="4" height="16" fill="#008000"/><rect x="423" y="297" width="8" height="16" fill="#000080"/><rect x="431" y="297" width="2" height="16" fill="#008000"/><rect x="433" y="297" width="71" height="16" fill="#00ff00"/><rect x="504" y="297" width="6" height="16" fill="#008000"/><rect x="510" y="297" width="66" height="16" fill="#000080"/><rect x="576" y="297" width="28" height="16" fill="#008000"/><rect x="604" y="297" width="27" height="16" fill="#00ff00"/><rect x="631" y="297" width="1" height="16" fill="#008000"/><rect x="632" y="297" width="6" height="16" fill="#00ff00"/><rect x="638" y="297" width="3" height="16" fill="#008000"/><rect x="641" y="297" width="19" height="16" fill="#00ff00"/><rect x="660" y="297" width="49" height="16" fill="#000080"/><rect x="709" y="297" width="1" height="16" fill="#00ff00"/><rect x="710" y="297" width="5" height="16" fill="#000080"/><rect x="715" y="297" width="16" height="16" fill="#00ff00"/><rect x="731" y="297" width="135" height="16" fill="#000080"/><rect x="146" y="317" width="147" height="16" fill="#000080"/><rect x="293" y="317" width="25" height="16" fill="#00ff00"/><rect x="318" y="317" width="1" height="16" fill="#008000"/><rect x="319" y="317" width="42" height="16" fill="#00ff00"/><rect x="361" y="317" width="3" height="16" fill="#008000"/><rect x="364" y="317" width="68" height="16" fill="#00ff00"/><rect x="432" y="317" width="5" height="16" fill="#008000"/><rect x="437" y="317" width="1" height="16" fill="#00ff00"/><rect x="438" y="317" width="2" height="16" fill="#008000"/><rect x="440" y="317" width="1" height="16" fill="#00ff00"/><rect x="441" y="317" width="33" height="16" fill="#000080"/><rect x="474" y="317" width="20" height="16" fill="#008000"/><rect x="494" y="317" width="1" height="16" fill="#00ff00"/><rect x="495" y="317" width="16" height="16" fill="#008000"/><rect x="511" y="317" width="2" height="16" fill="#00ff00"/><rect x="513" y="317" width="37" height="16" fill="#000080"/><rect x="550" y="317" width="2" height="16" fill="#008000"/><rect x="552" y="317" width="53" height="16" fill="#000080"/><rect x="605" y="317" width="96" height="16" fill="#00ff00"/><rect x="701" y="317" width="6" height="16" fill="#008000"/><rect x="707" y="317" width="26" height="16" fill="#00ff00"/><rect x="733" y="317" width="133" height="16" fill="#000080"/><rect x="146" y="337" width="228" height="16" fill="#000080"/><rect x="374" y="337" width="28" height="16" fill="#008000"/><rect x="402" y="337" width="21" height="16" fill="#00ff00"/><rect x="423" y="337" width="19" height="16" fill="#000080"/><rect x="442" y="337" width="10" height="16" fill="#008000"/><rect x="452" y="337" width="19" height="16" fill="#00ff00"/><rect x="471" y="337" width="2" height="16" fill="#008000"/><rect x="473" y="337" width="37" height="16" fill="#00ff00"/><rect x="510" y="337" width="22" height="16" fill="#000080"/><rect x="532" y="337" width="16" height="16" fill="#00ff00"/><rect x="548" y="337" width="7" height="16" fill="#008000"/><rect x="555" y="337" width="2" height="16" fill="#00ff00"/><rect x="557" y="337" width="27" height="16" fill="#008000"/><rect x="584" y="337" width="4" height="16" fill="#00ff00"/><rect x="588" y="337" width="1" height="16" fill="#008000"/><rect x="589" y="337" width="2" height="16" fill="#00ff00"/><rect x="591" y="337" width="30" height="16" fill="#000080"/><rect x="621" y="337" width="1" height="16" fill="#008000"/><rect x="622" y="337" width="15" height="16" fill="#00ff00"/><rect x="637" y="337" width="9" height="16" fill="#008000"/><rect x="646" y="337" width="35" height="16" fill="#000080"/><rect x="681" y="337" width="4" height="16" fill="#008000"/><rect x="685" y="337" width="12" height="16" fill="#00ff00"/><rect x="697" y="337" width="1" height="16" fill="#008000"/><rect x="698" y="337" width="19" height="16" fill="#00ff00"/><rect x="717" y="337" width="15" height="16" fill="#008000"/><rect x="732" y="337" width="13" height="16" fill="#00ff00"/><rect x="745" y="337" width="1" height="16" fill="#008000"/><rect x="746" y="337" width="20" height="16" fill="#00ff00"/><rect x="766" y="337" width="1" height="16" fill="#008000"/><rect x="767" y="337" width="4" height="16" fill="#00ff00"/><rect x="771" y="337" width="95" height="16" fill="#000080"/><rect x="146" y="357" width="176" height="16" fill="#000080"/><rect x="322" y="357" width="36" height="16" fill="#00ff00"/><rect x="358" y="357" width="9" height="16" fill="#000080"/><rect x="367" y="357" width="15" height="16" fill="#008000"/><rect x="382" y="357" width="31" height="16" fill="#00ff00"/><rect x="413" y="357" width="9" height="16" fill="#008000"/><rect x="422" y="357" width="39" height="16" fill="#00ff00"/><rect x="461" y="357" width="18" height="16" fill="#000080"/><rect x="479" y="357" width="9" height="16" fill="#00ff00"/><rect x="488" y="357" width="2" height="16" fill="#008000"/><rect x="490" y="357" width="5" height="16" fill="#00ff00"/><rect x="495" y="357" width="2" height="16" fill="#008000"/><rect x="497" y="357" width="5" height="16" fill="#00ff00"/><rect x="502" y="357" width="20" height="16" fill="#000080"/><rect x="522" y="357" width="8" height="16" fill="#00ff00"/><rect x="530" y="357" width="3" height="16" fill="#008000"/><rect x="533" y="357" width="41" height="16" fill="#00ff00"/><rect x="574" y="357" width="6" height="16" fill="#008000"/><rect x="580" y="357" width="34" height="16" fill="#000080"/><rect x="614" y="357" width="22" height="16" fill="#008000"/><rect x="636" y="357" width="13" height="16" fill="#00ff00"/><rect x="649" y="357" width="62" height="16" fill="#008000"/><rect x="711" y="357" width="155" height="16" fill="#000080"/><rect x="146" y="377" width="720" height="16" fill="#000080"/><rect x="146" y="397" width="720" height="16" fill="#000080"/><rect x="146" y="417" width="158" height="16" fill="#000080"/><rect x="304" y="417" width="77" height="16" fill="#00ff00"/><rect x="381" y="417" width="17" height="16" fill="#000080"/><rect x="398" y="417" width="23" height="16" fill="#00ff00"/><rect x="421" y="417" width="2" height="16" fill="#008000"/><rect x="423" y="417" width="20" height="16" fill="#000080"/><rect x="443" y="417" width="74" height="16" fill="#00ff00"/><rect x="517" y="417" width="5" height="16" fill="#000080"/><rect x="522" y="417" width="42" height="16" fill="#00ff00"/><rect x="564" y="417" width="8" height="16" fill="#008000"/><rect x="572" y="417" width="26" height="16" fill="#000080"/><rect x="598" y="417" width="23" height="16" fill="#008000"/><rect x="621" y="417" width="7" height="16" fill="#000080"/><rect x="628" y="417" width="1" height="16" fill="#00ff00"/><rect x="629" y="417" width="1" height="16" fill="#008000"/><rect x="630" y="417" width="3" height="16" fill="#00ff00"/><rect x="633" y="417" width="7" height="16" fill="#000080"/><rect x="640" y="417" width="9" height="16" fill="#00ff00"/><rect x="649" y="417" width="5" height="16" fill="#008000"/><rect x="654" y="417" width="57" height="16" fill="#00ff00"/><rect x="711" y="417" width="155" height="16" fill="#000080"/><rect x="146" y="437" width="144" height="16" fill="#000080"/><rect x="290" y="437" width="51" height="16" fill="#00ff00"/><rect x="341" y="437" width="9" height="16" fill="#000080"/><rect x="350" y="437" width="25" height="16" fill="#00ff00"/><rect x="375" y="437" width="5" height="16" fill="#008000"/><rect x="380" y="437" width="25" height="16" fill="#000080"/><rect x="405" y="437" width="24" height="16" fill="#00ff00"/><rect x="429" y="437" width="3" height="16" fill="#008000"/><rect x="432" y="437" width="16" height="16" fill="#000080"/><rect x="448" y="437" width="3" height="16" fill="#008000"/><rect x="451" y="437" width="61" height="16" fill="#00ff00"/><rect x="512" y="437" width="1" height="16" fill="#008000"/><rect x="513" y="437" width="1" height="16" fill="#00ff00"/><rect x="514" y="437" width="15" height="16" fill="#000080"/><rect x="529" y="437" width="1" height="16" fill="#00ff00"/><rect x="530" y="437" width="59" height="16" fill="#000080"/><rect x="589" y="437" width="36" height="16" fill="#008000"/><rect x="625" y="437" width="16" height="16" fill="#00ff00"/><rect x="641" y="437" width="11" height="16" fill="#000080"/><rect x="652" y="437" width="9" height="16" fill="#00ff00"/><rect x="661" y="437" width="31" height="16" fill="#008000"/><rect x="692" y="437" width="1" height="16" fill="#00ff00"/><rect x="693" y="437" width="39" height="16" fill="#008000"/><rect x="732" y="437" width="2" height="16" fill="#00ff00"/><rect x="734" y="437" width="132" height="16" fill="#000080"/><rect x="146" y="457" width="149" height="16" fill="#000080"/><rect x="295" y="457" width="27" height="16" fill="#00ff00"/><rect x="322" y="457" width="3" height="16" fill="#008000"/><rect x="325" y="457" width="10" height="16" fill="#00ff00"/><rect x="335" y="457" width="1" height="16" fill="#008000"/><rect x="336" y="457" width="70" height="16" fill="#00ff00"/><rect x="406" y="457" width="23" height="16" fill="#000080"/><rect x="429" y="457" width="15" height="16" fill="#00ff00"/><rect x="444" y="457" width="6" height="16" fill="#008000"/><rect x="450" y="457" width="2" height="16" fill="#00ff00"/><rect x="452" y="457" width="7" height="16" fill="#008000"/><rect x="459" y="457" width="16" height="16" fill="#000080"/><rect x="475" y="457" width="10" height="16" fill="#008000"/><rect x="485" y="457" width="3" height="16" fill="#00ff00"/><rect x="488" y="457" width="1" height="16" fill="#008000"/><rect x="489" y="457" width="2" height="16" fill="#00ff00"/><rect x="491" y="457" width="13" height="16" fill="#000080"/><rect x="504" y="457" width="3" height="16" fill="#00ff00"/><rect x="507" y="457" width="7" height="16" fill="#008000"/><rect x="514" y="457" width="91" height="16" fill="#00ff00"/><rect x="605" y="457" width="1" height="16" fill="#008000"/><rect x="606" y="457" width="3" height="16" fill="#00ff00"/><rect x="609" y="457" width="22" height="16" fill="#008000"/><rect x="631" y="457" width="1" height="16" fill="#00ff00"/><rect x="632" y="457" width="1" height="16" fill="#008000"/><rect x="633" y="457" width="3" height="16" fill="#00ff00"/><rect x="636" y="457" width="1" height="16" fill="#008000"/><rect x="637" y="457" width="5" height="16" fill="#00ff00"/><rect x="642" y="457" width="3" height="16" fill="#008000"/><rect x="645" y="457" width="17" height="16" fill="#000080"/><rect x="662" y="457" width="22" height="16" fill="#00ff00"/><rect x="684" y="457" width="4" height="16" fill="#008000"/><rect x="688" y="457" width="178" height="16" fill="#000080"/><rect x="146" y="477" width="196" height="16" fill="#000080"/><rect x="342" y="477" width="8" height="16" fill="#008000"/><rect x="350" y="477" width="1" height="16" fill="#00ff00"/><rect x="351" y="477" width="1" height="16" fill="#008000"/><rect x="352" y="477" width="2" height="16" fill="#00ff00"/><rect x="354" y="477" width="53" height="16" fill="#008000"/><rect x="407" y="477" width="1" height="16" fill="#00ff00"/><rect x="408" y="477" width="1" height="16" fill="#008000"/><rect x="409" y="477" width="13" height="16" fill="#00ff00"/><rect x="422" y="477" width="19" height="16" fill="#008000"/><rect x="441" y="477" width="17" height="16" fill="#000080"/><rect x="458" y="477" width="34" height="16" fill="#008000"/><rect x="492" y="477" width="21" height="16" fill="#00ff00"/><rect x="513" y="477" width="31" height="16" fill="#000080"/><rect x="544" y="477" width="5" height="16" fill="#00ff00"/><rect x="549" y="477" width="1" height="16" fill="#008000"/><rect x="550" y="477" width="1" height="16" fill="#00ff00"/><rect x="551" y="477" width="1" height="16" fill="#008000"/><rect x="552" y="477" width="19" height="16" fill="#00ff00"/><rect x="571" y="477" width="9" height="16" fill="#000080"/><rect x="580" y="477" width="40" height="16" fill="#00ff00"/><rect x="620" y="477" width="1" height="16" fill="#008000"/><rect x="621" y="477" width="63" height="16" fill="#00ff00"/><rect x="684" y="477" width="15" height="16" fill="#000080"/><rect x="699" y="477" width="1" height="16" fill="#00ff00"/><rect x="700" y="477" width="1" height="16" fill="#008000"/><rect x="701" y="477" width="4" height="16" fill="#00ff00"/><rect x="705" y="477" width="1" height="16" fill="#008000"/><rect x="706" y="477" width="1" height="16" fill="#00ff00"/><rect x="707" y="477" width="11" height="16" fill="#008000"/><rect x="718" y="477" width="1" height="16" fill="#00ff00"/><rect x="719" y="477" width="27" height="16" fill="#008000"/><rect x="746" y="477" width="20" height="16" fill="#000080"/><rect x="766" y="477" width="4" height="16" fill="#00ff00"/><rect x="770" y="477" width="6" height="16" fill="#008000"/><rect x="776" y="477" width="10" height="16" fill="#00ff00"/><rect x="786" y="477" width="3" height="16" fill="#008000"/><rect x="789" y="477" width="16" height="16" fill="#00ff00"/><rect x="805" y="477" width="61" height="16" fill="#000080"/><rect x="146" y="497" width="211" height="16" fill="#000080"/><rect x="357" y="497" width="101" height="16" fill="#00ff00"/><rect x="458" y="497" width="5" height="16" fill="#008000"/><rect x="463" y="497" width="3" height="16" fill="#00ff00"/><rect x="466" y="497" width="7" height="16" fill="#008000"/><rect x="473" y="497" width="9" height="16" fill="#00ff00"/><rect x="482" y="497" width="1" height="16" fill="#008000"/><rect x="483" y="497" width="2" height="16" fill="#00ff00"/><rect x="485" y="497" width="22" height="16" fill="#000080"/><rect x="507" y="497" width="21" height="16" fill="#00ff00"/><rect x="528" y="497" width="1" height="16" fill="#008000"/><rect x="529" y="497" width="1" height="16" fill="#00ff00"/><rect x="530" y="497" width="1" height="16" fill="#008000"/><rect x="531" y="497" width="2" height="16" fill="#00ff00"/><rect x="533" y="497" width="12" height="16" fill="#000080"/><rect x="545" y="497" width="24" height="16" fill="#008000"/><rect x="569" y="497" width="1" height="16" fill="#00ff00"/><rect x="570" y="497" width="4" height="16" fill="#008000"/><rect x="574" y="497" width="34" height="16" fill="#000080"/><rect x="608" y="497" width="2" height="16" fill="#00ff00"/><rect x="610" y="497" width="22" height="16" fill="#008000"/><rect x="632" y="497" width="1" height="16" fill="#00ff00"/><rect x="633" y="497" width="2" height="16" fill="#008000"/><rect x="635" y="497" width="2" height="16" fill="#00ff00"/><rect x="637" y="497" width="1" height="16" fill="#008000"/><rect x="638" y="497" width="23" height="16" fill="#00ff00"/><rect x="661" y="497" width="205" height="16" fill="#000080"/><rect x="146" y="517" width="720" height="16" fill="#000080"/><rect x="146" y="537" width="720" height="16" fill="#000080"/><rect x="146" y="557" width="155" height="16" fill="#000080"/><rect x="301" y="557" width="39" height="16" fill="#00ff00"/><rect x="340" y="557" width="9" height="16" fill="#008000"/><rect x="349" y="557" width="14" height="16" fill="#00ff00"/><rect x="363" y="557" width="4" height="16" fill="#008000"/><rect x="367" y="557" width="5" height="16" fill="#00ff00"/><rect x="372" y="557" width="1" height="16" fill="#008000"/><rect x="373" y="557" width="1" height="16" fill="#00ff00"/><rect x="374" y="557" width="1" height="16" fill="#008000"/><rect x="375" y="557" width="13" height="16" fill="#000080"/><rect x="388" y="557" width="64" height="16" fill="#00ff00"/><rect x="452" y="557" width="34" height="16" fill="#000080"/><rect x="486" y="557" width="9" height="16" fill="#00ff00"/><rect x="495" y="557" width="10" height="16" fill="#000080"/><rect x="505" y="557" width="19" height="16" fill="#00ff00"/><rect x="524" y="557" width="1" height="16" fill="#008000"/><rect x="525" y="557" width="45" height="16" fill="#00ff00"/><rect x="570" y="557" width="2" height="16" fill="#008000"/><rect x="572" y="557" width="2" height="16" fill="#00ff00"/><rect x="574" y="557" width="1" height="16" fill="#008000"/><rect x="575" y="557" width="2" height="16" fill="#00ff00"/><rect x="577" y="557" width="15" height="16" fill="#000080"/><rect x="592" y="557" width="4" height="16" fill="#008000"/><rect x="596" y="557" width="7" height="16" fill="#000080"/><rect x="603" y="557" width="32" height="16" fill="#008000"/><rect x="635" y="557" width="8" height="16" fill="#00ff00"/><rect x="643" y="557" width="2" height="16" fill="#008000"/><rect x="645" y="557" width="49" height="16" fill="#00ff00"/><rect x="694" y="557" width="2" height="16" fill="#008000"/><rect x="696" y="557" width="12" height="16" fill="#00ff00"/><rect x="708" y="557" width="4" height="16" fill="#008000"/><rect x="712" y="557" width="20" height="16" fill="#00ff00"/><rect x="732" y="557" width="134" height="16" fill="#000080"/><rect x="146" y="577" width="147" height="16" fill="#000080"/><rect x="293" y="577" width="48" height="16" fill="#00ff00"/><rect x="341" y="577" width="5" height="16" fill="#008000"/><rect x="346" y="577" width="19" height="16" fill="#00ff00"/><rect x="365" y="577" width="1" height="16" fill="#008000"/><rect x="366" y="577" width="34" height="16" fill="#00ff00"/><rect x="400" y="577" width="7" height="16" fill="#008000"/><rect x="407" y="577" width="33" height="16" fill="#000080"/><rect x="440" y="577" width="1" height="16" fill="#00ff00"/><rect x="441" y="577" width="1" height="16" fill="#008000"/><rect x="442" y="577" width="8" height="16" fill="#00ff00"/><rect x="450" y="577" width="1" height="16" fill="#008000"/><rect x="451" y="577" width="7" height="16" fill="#00ff00"/><rect x="458" y="577" width="6" height="16" fill="#008000"/><rect x="464" y="577" width="28" height="16" fill="#00ff00"/><rect x="492" y="577" width="1" height="16" fill="#008000"/><rect x="493" y="577" width="2" height="16" fill="#00ff00"/><rect x="495" y="577" width="5" height="16" fill="#008000"/><rect x="500" y="577" width="38" height="16" fill="#000080"/><rect x="538" y="577" width="20" height="16" fill="#008000"/><rect x="558" y="577" width="1" height="16" fill="#00ff00"/><rect x="559" y="577" width="13" height="16" fill="#008000"/><rect x="572" y="577" width="1" height="16" fill="#00ff00"/><rect x="573" y="577" width="18" height="16" fill="#000080"/><rect x="591" y="577" width="2" height="16" fill="#008000"/><rect x="593" y="577" width="44" height="16" fill="#00ff00"/><rect x="637" y="577" width="2" height="16" fill="#008000"/><rect x="639" y="577" width="38" height="16" fill="#00ff00"/><rect x="677" y="577" width="2" height="16" fill="#008000"/><rect x="679" y="577" width="12" height="16" fill="#000080"/><rect x="691" y="577" width="6" height="16" fill="#00ff00"/><rect x="697" y="577" width="10" height="16" fill="#000080"/><rect x="707" y="577" width="59" height="16" fill="#00ff00"/><rect x="766" y="577" width="100" height="16" fill="#000080"/><rect x="146" y="597" width="198" height="16" fill="#000080"/><rect x="344" y="597" width="39" height="16" fill="#00ff00"/><rect x="383" y="597" width="7" height="16" fill="#000080"/><rect x="390" y="597" width="21" height="16" fill="#00ff00"/><rect x="411" y="597" width="1" height="16" fill="#008000"/><rect x="412" y="597" width="2" height="16" fill="#00ff00"/><rect x="414" y="597" width="5" height="16" fill="#008000"/><rect x="419" y="597" width="1" height="16" fill="#00ff00"/><rect x="420" y="597" width="3" height="16" fill="#008000"/><rect x="423" y="597" width="22" height="16" fill="#000080"/><rect x="445" y="597" width="7" height="16" fill="#008000"/><rect x="452" y="597" width="1" height="16" fill="#00ff00"/><rect x="453" y="597" width="4" height="16" fill="#008000"/><rect x="457" y="597" width="3" height="16" fill="#00ff00"/><rect x="460" y="597" width="32" height="16" fill="#000080"/><rect x="492" y="597" width="3" height="16" fill="#00ff00"/><rect x="495" y="597" width="6" height="16" fill="#008000"/><rect x="501" y="597" width="14" height="16" fill="#00ff00"/><rect x="515" y="597" width="9" height="16" fill="#000080"/><rect x="524" y="597" width="2" height="16" fill="#008000"/><rect x="526" y="597" width="12" height="16" fill="#00ff00"/><rect x="538" y="597" width="3" height="16" fill="#008000"/><rect x="541" y="597" width="75" height="16" fill="#00ff00"/><rect x="616" y="597" width="4" height="16" fill="#008000"/><rect x="620" y="597" width="23" height="16" fill="#00ff00"/><rect x="643" y="597" width="4" height="16" fill="#008000"/><rect x="647" y="597" width="15" height="16" fill="#000080"/><rect x="662" y="597" width="4" height="16" fill="#00ff00"/><rect x="666" y="597" width="1" height="16" fill="#008000"/><rect x="667" y="597" width="15" height="16" fill="#00ff00"/><rect x="682" y="597" width="7" height="16" fill="#008000"/><rect x="689" y="597" width="53" height="16" fill="#00ff00"/><rect x="742" y="597" width="1" height="16" fill="#008000"/><rect x="743" y="597" width="4" height="16" fill="#00ff00"/><rect x="747" y="597" width="5" height="16" fill="#008000"/><rect x="752" y="597" width="114" height="16" fill="#000080"/><rect x="146" y="617" width="221" height="16" fill="#000080"/><rect x="367" y="617" width="2" height="16" fill="#00ff00"/><rect x="369" y="617" width="62" height="16" fill="#008000"/><rect x="431" y="617" width="1" height="16" fill="#00ff00"/><rect x="432" y="617" width="36" height="16" fill="#000080"/><rect x="468" y="617" width="11" height="16" fill="#008000"/><rect x="479" y="617" width="5" height="16" fill="#00ff00"/><rect x="484" y="617" width="9" height="16" fill="#008000"/><rect x="493" y="617" width="9" height="16" fill="#00ff00"/><rect x="502" y="617" width="49" height="16" fill="#008000"/><rect x="551" y="617" width="2" height="16" fill="#00ff00"/><rect x="553" y="617" width="1" height="16" fill="#008000"/><rect x="554" y="617" width="1" height="16" fill="#00ff00"/><rect x="555" y="617" width="2" height="16" fill="#008000"/><rect x="557" y="617" width="31" height="16" fill="#00ff00"/><rect x="588" y="617" width="13" height="16" fill="#008000"/><rect x="601" y="617" width="38" height="16" fill="#000080"/><rect x="639" y="617" width="13" height="16" fill="#008000"/><rect x="652" y="617" width="19" height="16" fill="#00ff00"/><rect x="671" y="617" width="36" height="16" fill="#000080"/><rect x="707" y="617" width="17" height="16" fill="#00ff00"/><rect x="724" y="617" width="2" height="16" fill="#008000"/><rect x="726" y="617" width="7" height="16" fill="#00ff00"/><rect x="733" y="617" width="2" height="16" fill="#008000"/><rect x="735" y="617" width="131" height="16" fill="#000080"/><rect x="146" y="637" width="208" height="16" fill="#000080"/><rect x="354" y="637" width="7" height="16" fill="#00ff00"/><rect x="361" y="637" width="3" height="16" fill="#008000"/><rect x="364" y="637" width="1" height="16" fill="#00ff00"/><rect x="365" y="637" width="12" height="16" fill="#000080"/><rect x="377" y="637" width="7" height="16" fill="#00ff00"/><rect x="384" y="637" width="1" height="16" fill="#008000"/><rect x="385" y="637" width="4" height="16" fill="#00ff00"/><rect x="389" y="637" width="9" height="16" fill="#008000"/><rect x="398" y="637" width="1" height="16" fill="#00ff00"/><rect x="399" y="637" width="30" height="16" fill="#008000"/><rect x="429" y="637" width="3" height="16" fill="#00ff00"/><rect x="432" y="637" width="94" height="16" fill="#008000"/><rect x="526" y="637" width="340" height="16" fill="#000000"/></svg>
<div class="row" style="top:-3px"><span class="dn">Montag</span><span class="dt">1999-01-25</span></div>
<div class="row" style="top:17px"><span class="dn">Dienstag</span><span class="dt">1999-01-26</span></div>
<div class="row" style="top:37px"><span class="dn">Mittwoch</span><span class="dt">1999-01-27</span></div>
<div class="row" style="top:57px"><span class="dn">Donnerstag</span><span class="dt">1999-01-28</span></div>
<div class="row" style="top:77px"><span class="dn">Freitag</span><span class="dt">1999-01-29</span></div>
<div class="row" style="top:97px"><span class="dn">Samstag</span><span class="dt">1999-01-30</span></div>
<div class="row" style="top:117px"><span class="dn">Sonntag</span><span class="dt">1999-01-31</span></div>
<div class="row" style="top:137px"><span class="dn">Montag</span><span class="dt">1999-02-01</span></div>
<div class="row" style="top:157px"><span class="dn">Dienstag</span><span class="dt">1999-02-02</span></div>
<div class="row" style="top:177px"><span class="dn">Mittwoch</span><span class="dt">1999-02-03</span></div>
<div class="row" style="top:197px"><span class="dn">Donnerstag</span><span class="dt">1999-02-04</span></div>
<div class="row" style="top:217px"><span class="dn">Freitag</span><span class="dt">1999-02-05</span></div>
<div class="row" style="top:237px"><span class="dn">Samstag</span><span class="dt">1999-02-06</span></div>
<div class="row" style="top:257px"><span class="dn">Sonntag</span><span class="dt">1999-02-07</span></div>
<div class="row" style="top:277px"><span class="dn">Montag</span><span class="dt">1999-02-08</span></div>
<div class="row" style="top:297px"><span class="dn">Dienstag</span><span class="dt">1999-02-09</span></div>
<div class="row" style="top:317px"><span class="dn">Mittwoch</span><span class="dt">1999-02-10</span></div>
<div class="row" style="top:337px"><span class="dn">Donnerstag</span><span class="dt">1999-02-11</span></div>
<div class="row" style="top:357px"><span class="dn">Freitag</span><span class="dt">1999-02-12</span></div>
<div class="row" style="top:377px"><span class="dn">Samstag</span><span class="dt">1999-02-13</span></div>
<div class="row" style="top:397px"><span class="dn">Sonntag</span><span class="dt">1999-02-14</span></div>
<div class="row" style="top:417px"><span class="dn">Montag</span><span class="dt">1999-02-15</span></div>
<div class="row" style="top:437px"><span class="dn">Dienstag</span><span class="dt">1999-02-16</span></div>
<div class="row" style="top:457px"><span class="dn">Mittwoch</span><span class="dt">1999-02-17</span></div>
<div class="row" style="top:477px"><span class="dn">Donnerstag</span><span class="dt">1999-02-18</span></div>
<div class="row" style="top:497px"><span class="dn">Freitag</span><span class="dt">1999-02-19</span></div>
<div class="row" style="top:517px"><span class="dn">Samstag</span><span class="dt">1999-02-20</span></div>
<div class="row" style="top:537px"><span class="dn">Sonntag</span><span class="dt">1999-02-21</span></div>
<div class="row" style="top:557px"><span class="dn">Montag</span><span class="dt">1999-02-22</span></div>
<div class="row" style="top:577px"><span class="dn">Dienstag</span><span class="dt">1999-02-23</span></div>
<div class="row" style="top:597px"><span class="dn">Mittwoch</span><span class="dt">1999-02-24</span></div>
<div class="row" style="top:617px"><span class="dn">Donnerstag</span><span class="dt">1999-02-25</span></div>
<div class="row" style="top:637px"><span class="dn">Freitag</span><span class="dt">1999-02-26</span></div>
</div>
<div class="abs" id="sb">
<div class="sbtn" style="top:0;height:16px"><svg width="16" height="16" style="position:absolute;left:-1px;top:-1px"><g shape-rendering="crispEdges" fill="#000"><rect x="8" y="7" width="1" height="1"/><rect x="7" y="8" width="3" height="1"/><rect x="6" y="9" width="5" height="1"/><rect x="5" y="10" width="7" height="1"/></g></svg></div>
<div class="sbtn" style="top:299px;height:312px"></div>
<div class="sbtn" style="top:640px;height:16px"><svg width="16" height="16" style="position:absolute;left:-1px;top:-1px"><g shape-rendering="crispEdges" fill="#000"><rect x="5" y="7" width="7" height="1"/><rect x="6" y="8" width="5" height="1"/><rect x="7" y="9" width="3" height="1"/><rect x="8" y="10" width="1" height="1"/></g></svg></div>
</div>

<!-- STATUS -->
<div class="abs" id="status">
<div class="panel" style="left:0;top:2px;width:1013px;height:20px"></div>
<div class="abs tx" id="t-status" style="top:6px">Fertig</div>
<div class="panel" style="left:1015px;top:2px;width:26px;height:20px"></div>

<svg class="abs" width="18" height="18" viewBox="0 0 18 18" style="left:1018px;top:3px">
<g transform="rotate(35 9 9)"><ellipse cx="9" cy="11" rx="2.600" ry="4.600" fill="#777" stroke="#444" stroke-width="0.800"/><path d="M9 7 V15" stroke="#ddd" stroke-width="0.800"/>
<circle cx="9" cy="5" r="2.600" fill="#f4f4f4" stroke="#888" stroke-width="0.600"/><circle cx="9.600" cy="4.400" r="1.300" fill="#111"/>
<path d="M6.500 9 L3.500 7.500 M6.400 11 L3 11.500 M6.600 13 L4 15.500 M11.500 9 L14.500 7.500 M11.600 11 L15 11.500 M11.400 13 L14 15.500" stroke="#888" stroke-width="0.700" fill="none"/></g></svg>
<svg class="abs" width="13" height="13" viewBox="0 0 13 13" style="left:1046px;top:8px"><path d="M1 12.500 L12.500 1 M5 12.500 L12.500 5 M9 12.500 L12.500 9" stroke="#808080" stroke-width="1.400"/><path d="M2 12.500 L12.500 2 M6 12.500 L12.500 6 M10 12.500 L12.500 10" stroke="#fff" stroke-width="0.800"/></svg>

</div>
</body>
</html>
